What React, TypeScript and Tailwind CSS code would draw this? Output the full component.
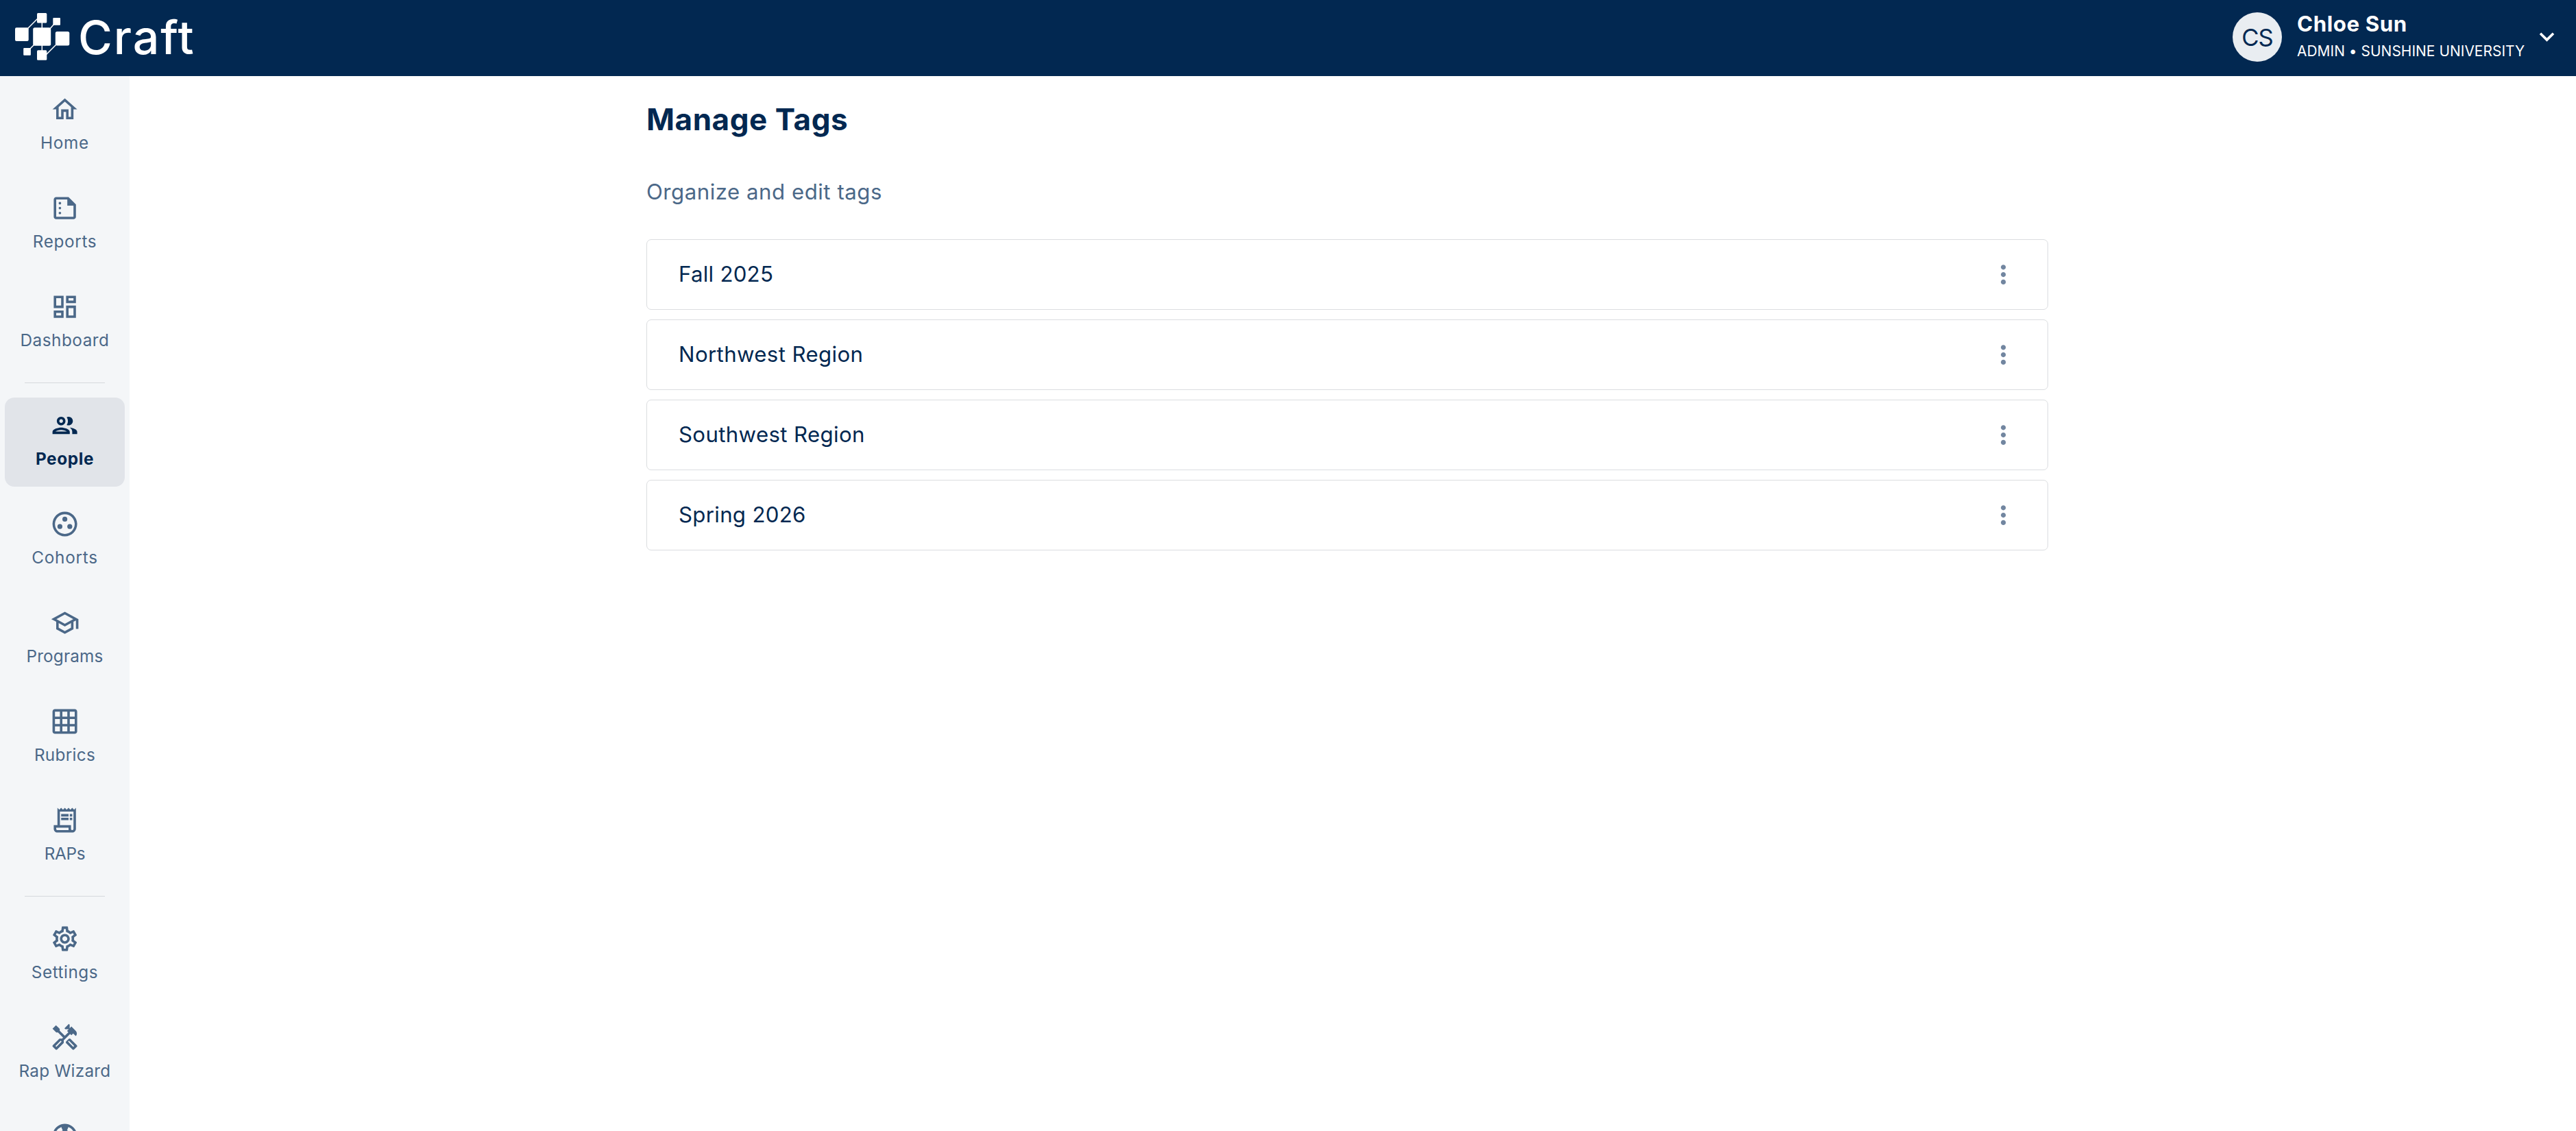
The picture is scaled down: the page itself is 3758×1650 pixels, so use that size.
import type { ComponentType } from "react";
import {
  MdKeyboardArrowDown,
  MdMoreVert,
  MdOutlineDashboard,
  MdOutlineGridOn,
  MdOutlineGroupWork,
  MdOutlineHandyman,
  MdOutlineHome,
  MdOutlineReceiptLong,
  MdOutlineSchool,
  MdOutlineSettings,
  MdOutlineSummarize,
  MdOutlineSupport,
} from "react-icons/md";

type NavEntry = {
  label?: string;
  icon: ComponentType<{ className?: string }>;
  tracking?: string;
  active?: boolean;
};

function PeopleIcon({ className }: { className?: string }) {
  return (
    <svg className={className} viewBox="0 0 24 24" fill="currentColor">
      <path d="M9 13.75c-2.34 0-7 1.17-7 3.5V19h14v-1.75c0-2.33-4.66-3.5-7-3.5zM4.34 17c.84-.58 2.87-1.25 4.66-1.25s3.82.67 4.66 1.25H4.34zM9 12c1.93 0 3.5-1.57 3.5-3.5S10.93 5 9 5 5.5 6.57 5.5 8.5 7.07 12 9 12zm0-5c.83 0 1.5.67 1.5 1.5S9.83 10 9 10s-1.5-.67-1.5-1.5S8.17 7 9 7zm7.04 6.81c1.16.84 1.96 1.96 1.96 3.44V19h4v-1.75c0-2.02-3.5-3.17-5.96-3.44zM15 12c1.93 0 3.5-1.57 3.5-3.5S16.93 5 15 5c-.54 0-1.04.13-1.5.35.63.89 1 1.98 1 3.15s-.37 2.26-1 3.15c.46.22.96.35 1.5.35z" />
    </svg>
  );
}

const navGroups: NavEntry[][] = [
  [
    { label: "Home", icon: MdOutlineHome, tracking: "tracking-[0.7px]" },
    { label: "Reports", icon: MdOutlineSummarize, tracking: "tracking-[0.65px]" },
    { label: "Dashboard", icon: MdOutlineDashboard, tracking: "tracking-[0.5px]" },
  ],
  [
    { label: "People", icon: PeopleIcon, tracking: "tracking-[0.64px]", active: true },
    { label: "Cohorts", icon: MdOutlineGroupWork, tracking: "tracking-[0.75px]" },
    { label: "Programs", icon: MdOutlineSchool, tracking: "tracking-[0.17px]" },
    { label: "Rubrics", icon: MdOutlineGridOn, tracking: "tracking-[0.3px]" },
    { label: "RAPs", icon: MdOutlineReceiptLong, tracking: "tracking-[-0.3px]" },
  ],
  [
    { label: "Settings", icon: MdOutlineSettings, tracking: "tracking-[0.54px]" },
    { label: "Rap Wizard", icon: MdOutlineHandyman, tracking: "tracking-[0.25px]" },
    { icon: MdOutlineSupport },
  ],
];

const tags = [
  { name: "Fall 2025", tracking: "tracking-[0.27px]" },
  { name: "Northwest Region", tracking: "tracking-[0.38px]" },
  { name: "Southwest Region", tracking: "tracking-[0.36px]" },
  { name: "Spring 2026", tracking: "tracking-[0.31px]" },
];

function Logo() {
  return (
    <div className="flex items-start text-white">
      <svg className="mt-[19px] h-[69px] w-[80px]" viewBox="22 19 80 69" fill="currentColor">
        <path
          d="M56 26 40 42M61.3 32v10M79 35l-7 8M50 65l-7 7M61.3 66v8M82 65 67 80"
          stroke="currentColor"
          strokeWidth="1.5"
          fill="none"
        />
        <rect x="54" y="19" width="14.3" height="14.5" rx="1.6" />
        <rect x="77.3" y="26" width="10.7" height="10.7" rx="1" />
        <rect x="22" y="40.3" width="19.7" height="19.7" rx="2" />
        <rect x="48.2" y="40.3" width="26" height="26.4" rx="2.5" />
        <rect x="80.8" y="46" width="20.5" height="20.5" rx="2.5" />
        <rect x="34.2" y="70" width="10.7" height="10.7" rx="1" />
        <rect x="54" y="73.3" width="14.3" height="14.5" rx="1.6" />
      </svg>
      <span className="mt-[14px] ml-[12px] text-[68px] leading-[80px] font-[550] tracking-[1.9px]">
        Craft
      </span>
    </div>
  );
}

function Header() {
  return (
    <header className="flex h-[111px] shrink-0 items-start justify-between bg-[#022851] pl-[22px]">
      <Logo />
      <div className="flex items-start text-white">
        <div className="mt-[18px] flex size-[72px] items-center justify-center rounded-full bg-[#e9edf1] text-[34.6px] leading-none tracking-[-1px] text-[#022851]">
          CS
        </div>
        <div className="ml-[22px] flex w-[333px] flex-col whitespace-nowrap">
          <span className="mt-[15px] text-[31.2px] leading-[40px] font-bold tracking-[0.6px]">
            Chloe Sun
          </span>
          <span className="mt-[4px] text-[20.8px] leading-[31px] tracking-[0.1px]">
            ADMIN • SUNSHINE UNIVERSITY
          </span>
        </div>
        <MdKeyboardArrowDown className="mt-[32px] mr-[21px] ml-[10px] size-[43px]" />
      </div>
    </header>
  );
}

function NavItem({ entry }: { entry: NavEntry }) {
  const Icon = entry.icon;
  return (
    <a
      className={`flex h-[130px] w-[175px] shrink-0 flex-col items-center rounded-[14px] pt-[19px] ${
        entry.active ? "bg-[#e1e4e9] font-bold text-[#022851]" : "text-[#4b6888]"
      }`}
    >
      <Icon className="size-[43.2px] shrink-0" />
      {entry.label && (
        <span
          className={`mt-[9px] text-[24.3px] leading-[36px] whitespace-nowrap ${entry.tracking}`}
        >
          {entry.label}
        </span>
      )}
    </a>
  );
}

function Sidebar() {
  return (
    <nav className="flex w-[189px] shrink-0 flex-col overflow-hidden bg-[#f4f6f8] pt-[8px]">
      {navGroups.map((group, index) => (
        <div key={index} className="flex shrink-0 flex-col items-center">
          {index > 0 && <div className="my-[21px] h-px w-[117px] shrink-0 bg-[#d6d9dd]" />}
          <div className="flex flex-col gap-[14px]">
            {group.map((entry, i) => (
              <NavItem key={i} entry={entry} />
            ))}
          </div>
        </div>
      ))}
    </nav>
  );
}

export default function App() {
  return (
    <div className="flex h-screen w-full flex-col overflow-hidden bg-white font-['Inter',sans-serif]">
      <Header />
      <div className="flex min-h-0 flex-1">
        <Sidebar />
        <main className="flex-1 pl-[754px]">
          <div className="w-[2045px]">
            <h1 className="pt-[33px] text-[44px] leading-[60px] font-bold tracking-[0.56px] text-[#022851]">
              Manage Tags
            </h1>
            <p className="mt-[56px] text-[31.2px] leading-[40px] tracking-[0.52px] text-[#4b6888]">
              Organize and edit tags
            </p>
            <ul className="mt-[49px] flex flex-col gap-[14px]">
              {tags.map((tag) => (
                <li
                  key={tag.name}
                  className="flex h-[103px] items-center justify-between rounded-[7px] border border-[#dbdde0] pr-[43px] pl-[46px]"
                >
                  <span
                    className={`pb-[2px] text-[31.2px] leading-[40px] text-[#022851] ${tag.tracking}`}
                  >
                    {tag.name}
                  </span>
                  <MdMoreVert className="size-[43.2px] text-[#7286a0]" />
                </li>
              ))}
            </ul>
          </div>
        </main>
      </div>
    </div>
  );
}
